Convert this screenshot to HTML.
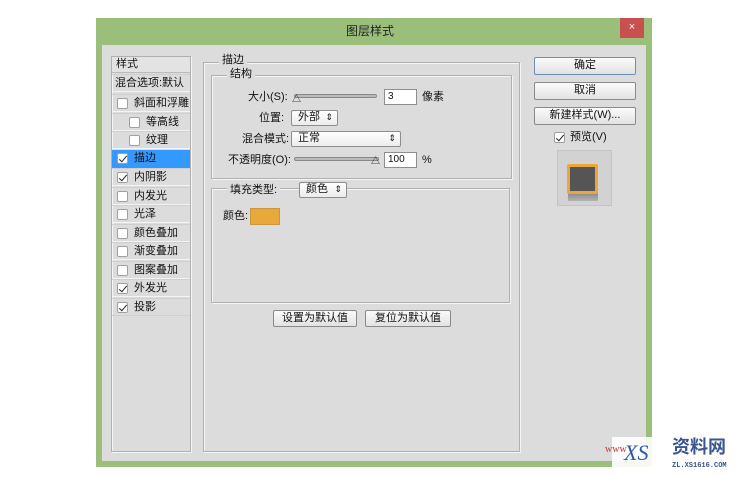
<!DOCTYPE html>
<html><head><meta charset="utf-8"><style>
*{margin:0;padding:0;box-sizing:border-box}
body{width:750px;height:477px;background:#fff;position:relative;overflow:hidden;font-family:"Liberation Sans","Noto Sans CJK SC",sans-serif;font-size:11px;color:#111}
.a{position:absolute}
.t{position:absolute;white-space:nowrap;line-height:13px}
.row{position:absolute;left:112px;width:78px;height:18px;border-bottom:1px solid #f4f4f4;border-top:1px solid #cfcfcf}
.cb{position:absolute;width:11px;height:11px;background:#fff;border:1px solid #a0a0a0;border-radius:2px}
.cb.k::after{content:"";position:absolute;left:3px;top:0px;width:3px;height:7px;border:solid #222;border-width:0 1.5px 1.5px 0;transform:rotate(40deg)}
.btn{position:absolute;background:linear-gradient(#fbfbfb,#e2e2e2);border:1px solid #8a8a8a;border-radius:2px;text-align:center;line-height:15px;font-size:11px}
.box{position:absolute;border:1px solid #b0b0b0;box-shadow:1px 1px 0 #f5f5f5 inset,1px 1px 0 #f5f5f5}
.in{position:absolute;background:#fff;border:1px solid #8e8e8e;padding-left:3px;line-height:13px;font-size:10px}
.sel{position:absolute;background:linear-gradient(#fff,#ececec);border:1px solid #8e8e8e;border-radius:2px;padding-left:6px;line-height:13px}
.sel::after{content:"⇕";position:absolute;right:4px;top:0;font-size:9px}
.sl{position:absolute;height:4px;background:#bbb;border:1px solid #888;border-radius:2px}
.leg{position:absolute;background:#dcdcdc;padding:0 3px}
</style></head><body>
<div class="a" style="left:96px;top:18px;width:556px;height:449px;background:#9bbf7a"></div>
<div class="t" style="left:346px;top:25px;font-size:12px;color:#222">图层样式</div>
<div class="a" style="left:620px;top:18px;width:24px;height:20px;background:#c9504e;color:#fff;text-align:center;line-height:19px;font-size:11px">×</div>
<div class="a" style="left:102px;top:45px;width:544px;height:416px;background:#dcdcdc"></div>

<!-- left list -->
<div class="box" style="left:111px;top:56px;width:80px;height:396px"></div>
<div class="a" style="left:112px;top:57px;width:78px;height:16px;background:#e3e3e3;border-bottom:1px solid #bbb"></div>
<div class="t" style="left:116px;top:58px">样式</div>
<div class="row" style="top:74px"></div><div class="t" style="left:115px;top:77px">混合选项:默认</div>
<div class="row" style="top:94px"></div><div class="cb" style="left:117px;top:98px"></div><div class="t" style="left:134px;top:97px">斜面和浮雕</div>
<div class="row" style="top:113px"></div><div class="cb" style="left:129px;top:117px"></div><div class="t" style="left:146px;top:116px">等高线</div>
<div class="row" style="top:131px"></div><div class="cb" style="left:129px;top:135px"></div><div class="t" style="left:146px;top:134px">纹理</div>
<div class="row" style="top:150px;background:#3399ff;border-color:#3399ff"></div><div class="cb k" style="left:117px;top:153px"></div><div class="t" style="left:134px;top:152px">描边</div>
<div class="row" style="top:168px"></div><div class="cb k" style="left:117px;top:172px"></div><div class="t" style="left:134px;top:171px">内阴影</div>
<div class="row" style="top:187px"></div><div class="cb" style="left:117px;top:191px"></div><div class="t" style="left:134px;top:190px">内发光</div>
<div class="row" style="top:205px"></div><div class="cb" style="left:117px;top:209px"></div><div class="t" style="left:134px;top:208px">光泽</div>
<div class="row" style="top:224px"></div><div class="cb" style="left:117px;top:228px"></div><div class="t" style="left:134px;top:227px">颜色叠加</div>
<div class="row" style="top:242px"></div><div class="cb" style="left:117px;top:246px"></div><div class="t" style="left:134px;top:245px">渐变叠加</div>
<div class="row" style="top:261px"></div><div class="cb" style="left:117px;top:265px"></div><div class="t" style="left:134px;top:264px">图案叠加</div>
<div class="row" style="top:279px"></div><div class="cb k" style="left:117px;top:283px"></div><div class="t" style="left:134px;top:282px">外发光</div>
<div class="row" style="top:298px;border-bottom:1px solid #cfcfcf"></div><div class="cb k" style="left:117px;top:302px"></div><div class="t" style="left:134px;top:301px">投影</div>

<!-- middle -->
<div class="box" style="left:203px;top:62px;width:317px;height:390px"></div>
<div class="leg t" style="left:219px;top:54px">描边</div>
<div class="box" style="left:211px;top:75px;width:301px;height:104px"></div>
<div class="leg t" style="left:227px;top:68px">结构</div>
<div class="t" style="left:248px;top:91px">大小(S):</div>
<div class="sl" style="left:294px;top:94px;width:83px"></div>
<div class="t" style="left:292px;top:93px;font-size:9px">△</div>
<div class="in" style="left:384px;top:89px;width:33px;height:16px">3</div>
<div class="t" style="left:422px;top:91px">像素</div>
<div class="t" style="left:259px;top:112px">位置:</div>
<div class="sel" style="left:291px;top:110px;width:47px;height:16px">外部</div>
<div class="t" style="left:242px;top:133px">混合模式:</div>
<div class="sel" style="left:291px;top:131px;width:110px;height:16px">正常</div>
<div class="t" style="left:228px;top:154px">不透明度(O):</div>
<div class="sl" style="left:294px;top:157px;width:85px"></div>
<div class="t" style="left:371px;top:155px;font-size:9px">△</div>
<div class="in" style="left:384px;top:152px;width:33px;height:16px">100</div>
<div class="t" style="left:422px;top:154px">%</div>

<div class="box" style="left:211px;top:188px;width:299px;height:115px"></div>
<div class="leg t" style="left:227px;top:184px;padding-right:3px">填充类型:</div>
<div class="sel" style="left:299px;top:182px;width:48px;height:16px">颜色</div>
<div class="t" style="left:223px;top:210px">颜色:</div>
<div class="a" style="left:250px;top:208px;width:30px;height:17px;background:#e9a93a;border:1px solid #c8963e"></div>
<div class="btn" style="left:273px;top:310px;width:84px;height:17px">设置为默认值</div>
<div class="btn" style="left:365px;top:310px;width:86px;height:17px">复位为默认值</div>

<!-- right -->
<div class="btn" style="left:534px;top:57px;width:102px;height:18px;border-color:#6d8fb5">确定</div>
<div class="btn" style="left:534px;top:82px;width:102px;height:18px">取消</div>
<div class="btn" style="left:534px;top:107px;width:102px;height:18px">新建样式(W)...</div>
<div class="cb k" style="left:554px;top:132px"></div>
<div class="t" style="left:570px;top:131px">预览(V)</div>
<div class="a" style="left:557px;top:150px;width:55px;height:56px;background:#d2d2d2;border:1px solid #c4c4c4"></div>
<div class="a" style="left:568px;top:187px;width:30px;height:14px;background:linear-gradient(#555,#aaa);opacity:.8"></div>
<div class="a" style="left:567px;top:164px;width:31px;height:30px;background:#555;border:3px solid #eaa63b;border-radius:2px"></div>

<!-- watermark -->
<div class="a" style="left:612px;top:437px;width:138px;height:40px;background:#fff;opacity:.9"></div>
<div class="t" style="left:605px;top:443px;color:#c33;font-size:10px;font-family:'Liberation Serif',serif">www</div>
<div class="t" style="left:624px;top:440px;color:#2a5aa8;font-size:22px;line-height:26px;font-style:italic;font-family:'Liberation Serif',serif">XS</div>
<div class="t" style="left:672px;top:436px;color:#3a5590;font-size:18px;line-height:22px;font-weight:bold">资料网</div>
<div class="t" style="left:672px;top:460px;color:#3a5590;font-size:7px;font-family:'Liberation Mono',monospace;font-weight:bold">ZL.XS1616.COM</div>
</body></html>
